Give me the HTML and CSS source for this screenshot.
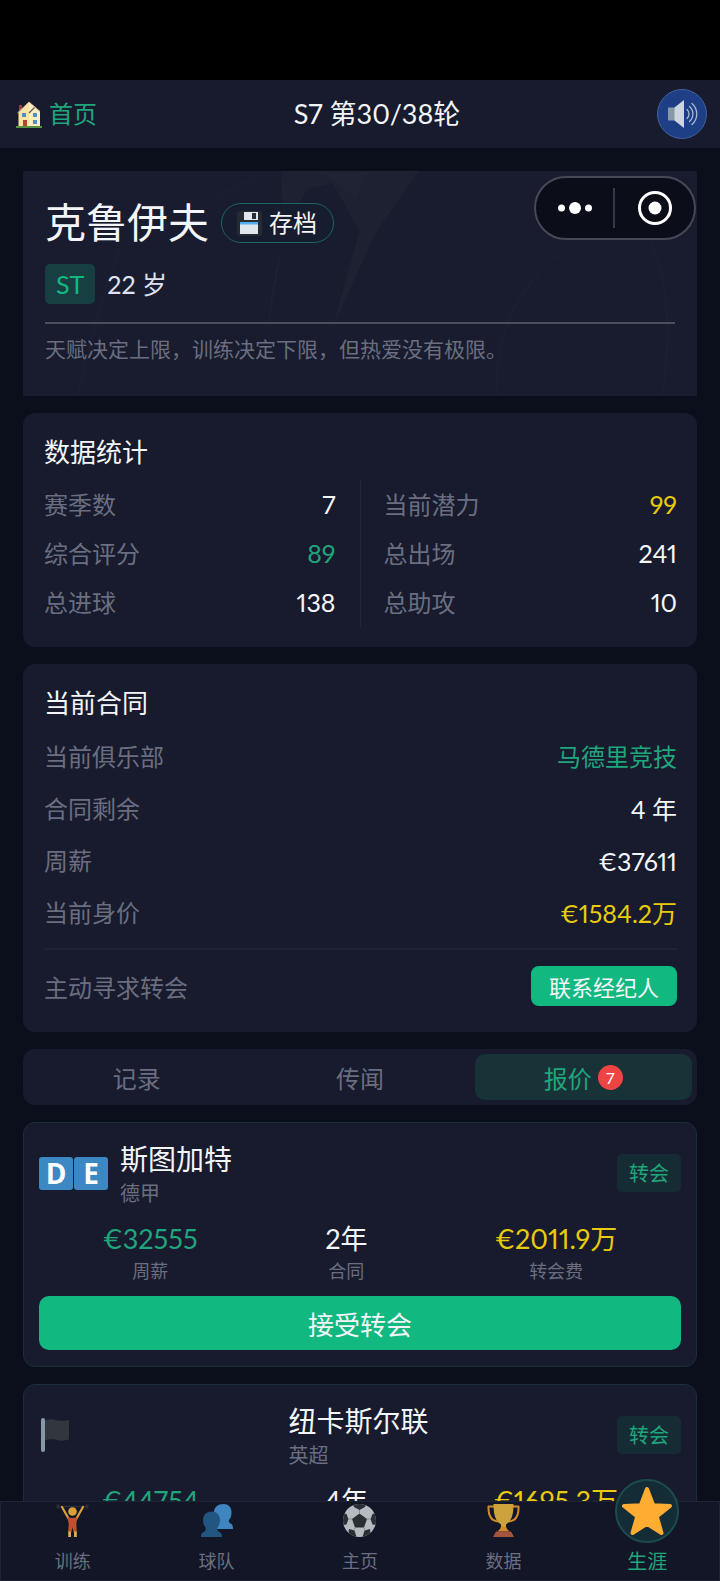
FILE: index.html
```html
<!DOCTYPE html>
<html lang="zh-CN">
<head>
<meta charset="utf-8">
<meta name="viewport" content="width=device-width, initial-scale=1">
<title>球员生涯</title>
<link rel="stylesheet" href="styles.css">
</head>
<body>
<div class="app">
  <div class="status-strip"></div>

  <header class="topbar">
    <a class="topbar__home" href="#home">
      <svg class="icon-house" viewBox="0 0 26 27" aria-hidden="true">
        <path fill="#fbe3a4" d="M2.500 11 9 5l4-4 11 10V25H2.500z"/>
        <path fill="#ffefc4" d="M13 1 24 10V25H13z"/>
        <path fill="#a3384a" d="M3 4h3v4L3 10.500z"/>
        <path fill="none" stroke="#6d5348" stroke-width="1.300" d="M13 12 19.500 5.500"/>
        <path fill="none" stroke="#d9bfa0" stroke-width="1" d="M1.500 12 13 1l11 10"/>
        <path fill="#4a90cf" d="M6 12h4v4H6zM17 12h4v4h-4zM17 19h4v4h-4z"/>
        <path fill="#b4432f" d="M7 19h4v6H7z"/>
        <path fill="#5b9142" d="M0 25h26v2H0z"/>
      </svg>
      <span>首页</span>
    </a>
    <h1 class="topbar__title">S7 第30/38轮</h1>
    <button class="topbar__sound" type="button" aria-label="声音">
      <svg viewBox="0 0 32 32" aria-hidden="true">
        <path fill="#8899a6" d="M2 9.500h7v13H2z"/>
        <path fill="#ccd6dd" d="M18 2v28L8.500 22.500v-13z"/>
        <path fill="none" stroke="#a9b9d0" stroke-width="1.300" stroke-linecap="round" d="M21 11.500a6 6 0 0 1 0 9M23.500 8.500a10 10 0 0 1 0 15M26 5.500a14 14 0 0 1 0 21"/>
      </svg>
    </button>
  </header>

  <main class="content">
    <section class="hero">
      <svg class="hero__art" viewBox="0 0 675 225" preserveAspectRatio="none" aria-hidden="true">
        <path fill="#ffffff" fill-opacity=".025" d="M258 0H396L353 62 310 157 337 60 310 12 285 18Q252 70 245 159L262 62z"/>
        <path fill="#ffffff" fill-opacity=".01" d="M291 0h56l-14 28-22-18z"/>
        <path fill="none" stroke="#ffffff" stroke-opacity=".012" stroke-width="3" d="M98 75Q72 145 55 225M245 0 190 28M628 70Q655 130 640 225M535 84Q470 140 475 225"/>
      </svg>
      <div class="hero__name-row">
        <h2 class="hero__name">克鲁伊夫</h2>
        <button class="save" type="button">
          <svg class="icon-disk" viewBox="0 0 25 25" aria-hidden="true">
            <rect width="25" height="25" rx="3" fill="#262b33"/>
            <path fill="#e1e8ed" d="M7 1h14v8H7z"/>
            <path fill="#292f33" d="M15 2h4v6h-4z"/>
            <path fill="#e1e8ed" d="M3 11h18v12H3z"/>
            <path fill="#55acee" d="M3 11h18v2.500H3z"/>
          </svg>
          <span>存档</span>
        </button>
      </div>
      <div class="hero__meta">
        <span class="position">ST</span>
        <span class="hero__age">22 岁</span>
      </div>
      <p class="hero__quote">天赋决定上限，训练决定下限，但热爱没有极限。</p>
    </section>

    <section class="card">
      <h3 class="card__title">数据统计</h3>
      <div class="stats">
        <dl class="stats__col">
          <div class="row"><dt>赛季数</dt><dd>7</dd></div>
          <div class="row"><dt>综合评分</dt><dd class="green">89</dd></div>
          <div class="row"><dt>总进球</dt><dd>138</dd></div>
        </dl>
        <dl class="stats__col">
          <div class="row"><dt>当前潜力</dt><dd class="gold">99</dd></div>
          <div class="row"><dt>总出场</dt><dd>241</dd></div>
          <div class="row"><dt>总助攻</dt><dd>10</dd></div>
        </dl>
      </div>
    </section>

    <section class="card card--contract">
      <h3 class="card__title">当前合同</h3>
      <dl class="contract">
        <div class="row"><dt>当前俱乐部</dt><dd class="green club">马德里竞技</dd></div>
        <div class="row"><dt>合同剩余</dt><dd>4 年</dd></div>
        <div class="row"><dt>周薪</dt><dd>€37611</dd></div>
        <div class="row"><dt>当前身价</dt><dd class="gold">€1584.2万</dd></div>
      </dl>
      <div class="agent">
        <span class="agent__label">主动寻求转会</span>
        <button class="agent__button" type="button">联系经纪人</button>
      </div>
    </section>

    <nav class="tabs" aria-label="生涯分类">
      <button class="tab" type="button">记录</button>
      <button class="tab" type="button">传闻</button>
      <button class="tab tab--active" type="button">报价<span class="tab__count">7</span></button>
    </nav>

    <article class="offer">
      <div class="offer__head">
        <span class="offer__flag"><span class="letter">D</span><span class="letter">E</span></span>
        <div class="offer__club">
          <h4 class="offer__name">斯图加特</h4>
          <p class="offer__league">德甲</p>
        </div>
        <span class="offer__type">转会</span>
      </div>
      <div class="terms">
        <div class="term"><span class="term__value green">€32555</span><span class="term__label">周薪</span></div>
        <div class="term"><span class="term__value">2年</span><span class="term__label">合同</span></div>
        <div class="term"><span class="term__value gold">€2011.9万</span><span class="term__label">转会费</span></div>
      </div>
      <button class="accept" type="button">接受转会</button>
    </article>

    <article class="offer">
      <div class="offer__head">
        <span class="offer__flag offer__flag--wide">
          <svg class="icon-flag" viewBox="0 0 32 34" aria-hidden="true">
            <path fill="#31373d" d="M5 2.500Q11 .5 17 2t13 0V21.500q-6 2-12 .5T5 22.500z"/>
            <rect x="2" width="4" height="34" rx="2" fill="#8899a6"/>
          </svg>
        </span>
        <div class="offer__club">
          <h4 class="offer__name">纽卡斯尔联</h4>
          <p class="offer__league">英超</p>
        </div>
        <span class="offer__type">转会</span>
      </div>
      <div class="terms">
        <div class="term"><span class="term__value green">€44754</span><span class="term__label">周薪</span></div>
        <div class="term"><span class="term__value">4年</span><span class="term__label">合同</span></div>
        <div class="term"><span class="term__value gold">€1695.3万</span><span class="term__label">转会费</span></div>
      </div>
      <button class="accept" type="button">接受转会</button>
    </article>
  </main>

  <nav class="navbar" aria-label="主导航">
    <a class="navitem" href="#train">
      <svg class="navitem__icon" viewBox="0 0 33 33" aria-hidden="true">
        <path stroke="#292f33" stroke-width="1.500" d="M1 2.500h31"/>
        <path stroke="#292f33" stroke-width="3" d="M2 .5v4M31 .5v4"/>
        <path fill="none" stroke="#d9a03c" stroke-width="2.200" stroke-linecap="round" d="M6 3 12.500 14.500M27 3 20.500 14.500"/>
        <circle cx="16.500" cy="7.500" r="4.300" fill="#d9a03c"/>
        <path fill="#c1502e" d="M11.500 13q5 2 10 0L20.300 20l.5 8h-3.300l-1-5-1 5h-3.300l.5-8z"/>
        <path fill="#e0a95a" d="M12.200 27.500h2.800V33h-2.800zM18 27.500h2.800V33H18z"/>
      </svg>
      <span class="navitem__label">训练</span>
    </a>
    <a class="navitem" href="#team">
      <svg class="navitem__icon" viewBox="0 0 33 33" aria-hidden="true">
        <path fill="#3f85c0" d="M23.500 0c5 0 8 3.500 8 8 0 3-.5 6-2.500 8-.5 2 .3 3 2 3.800 1.300.700 2 2 2 5.200H14V8c0-4.500 4-8 9.500-8z"/>
        <path fill="#22557f" d="M11.500 7.500c5.500 0 8.500 4 8.500 8.500 0 3-1 5.500-2.500 7.500-.5 2.500 0 3.500 2 4.500 1.700.800 2.500 2 2.500 5H1c0-3 .8-4.200 2.500-5 2-1 2.500-2 2-4.500C4 21.500 3 19 3 16c0-4.500 3-8.500 8.500-8.500z"/>
      </svg>
      <span class="navitem__label">球队</span>
    </a>
    <a class="navitem" href="#main">
      <svg class="navitem__icon" viewBox="0 0 33 33" aria-hidden="true">
        <defs><clipPath id="ball"><circle cx="16.500" cy="16.500" r="16.500"/></clipPath></defs>
        <g clip-path="url(#ball)">
          <path fill="#b5bbc1" d="M0 0h33v33H0z"/>
          <path fill="#292f33" d="M16.500 9.500 24 15l-3 8.500h-9L9 15zM10 0h13l-1 3-5.500 3L11 3zM0 9l3.500 1 2 5-2 5.500L0 21zM33 9l-3.500 1-2 5 2 5.500 3.500.5zM6 25l5.500 1.500 2 6.500H5zM27 25l-5.500 1.500-2 6.500H28z"/>
          <path stroke="#7a8188" stroke-width=".8" d="M16.500 9.500V6M24 15h3.500M9 15H5.500M12 23.500l-1 3M21 23.500l1 3"/>
        </g>
      </svg>
      <span class="navitem__label">主页</span>
    </a>
    <a class="navitem" href="#data">
      <svg class="navitem__icon" viewBox="0 0 33 33" aria-hidden="true">
        <path fill="none" stroke="#d18d2c" stroke-width="2" stroke-linejoin="round" d="M8 2.500H1.500Q1 17 11.500 17.500M25 2.500h6.500Q32 17 21.500 17.500"/>
        <path fill="#cda23c" d="M6.500 0h20c0 11-2 17-7.500 20.500V25h-5v-4.500C8.500 17 6.500 11 6.500 0z"/>
        <path fill="#d18d2c" d="M14 22.500h5q.5 3 3.500 5h-12q3-2 3.500-5z"/>
        <path fill="#a5543f" d="M9 27.500h15l3 5.500H6z"/>
      </svg>
      <span class="navitem__label">数据</span>
    </a>
    <a class="navitem navitem--active" href="#career" aria-current="page">
      <span class="navitem__disc">
        <svg class="icon-star" viewBox="0 0 50 48" aria-hidden="true">
          <path fill="#ffac33" stroke="#ffac33" stroke-width="4" stroke-linejoin="round" d="M25 2 31.200 18.300 48 19 34.800 29.500 39.500 46 25 36.800 10.500 46 15.200 29.500 2 19 18.800 18.300z"/>
        </svg>
      </span>
      <span class="navitem__label">生涯</span>
    </a>
  </nav>

  <div class="capsule">
    <button class="capsule__button" type="button" aria-label="更多">
      <svg class="icon-dots" viewBox="0 0 34 12" aria-hidden="true">
        <g fill="#fff"><circle cx="3.500" cy="6" r="3.500"/><circle cx="17" cy="6" r="6"/><circle cx="30.500" cy="6" r="3.500"/></g>
      </svg>
    </button>
    <button class="capsule__button" type="button" aria-label="关闭">
      <svg class="icon-target" viewBox="0 0 34 34" aria-hidden="true">
        <circle cx="17" cy="17" r="15.500" fill="none" stroke="#fff" stroke-width="3"/>
        <circle cx="17" cy="17" r="6.500" fill="#fff"/>
      </svg>
    </button>
  </div>
</div>
</body>
</html>
```

FILE: styles.css
```css
:root {
  --bg: #0b0f1b;
  --card: #171b2d;
  --green: #1fa67c;
  --green-solid: #11b981;
  --gold: #e9cb0d;
  --muted: #6a6e80;
  --text: #f4f5f8;
}

* {
  box-sizing: border-box;
}

body,
h1,
h2,
h3,
h4,
p,
dl,
dd {
  margin: 0;
}

h1,
h2,
h3,
h4 {
  font-weight: 400;
}

body {
  background: var(--bg);
  color: var(--text);
  font-family: Lato, "Noto Sans CJK SC", sans-serif;
  font-variant-numeric: proportional-nums;
  font-size: 24px;
}

button {
  font: inherit;
  color: inherit;
  border: 0;
  padding: 0;
  cursor: pointer;
}

a {
  color: inherit;
  text-decoration: none;
}

svg {
  display: block;
  flex: none;
}

.green {
  color: var(--green);
}

.gold {
  color: var(--gold);
}

.app {
  position: relative;
  display: flex;
  flex-direction: column;
  height: 100vh;
  overflow: hidden;
}

.status-strip {
  flex: none;
  height: 80px;
  background: #000;
}

/* Top bar */
.topbar {
  flex: none;
  display: flex;
  align-items: center;
  justify-content: space-between;
  height: 68px;
  padding: 0 13px 0 16px;
  background: var(--card);
}

.topbar__home {
  display: flex;
  align-items: center;
  gap: 7px;
  color: var(--green);
  line-height: 36px;
}

.icon-house {
  width: 26px;
  height: 27px;
}

.topbar__title {
  font-size: 27px;
  line-height: 36px;
}

.topbar__sound {
  display: grid;
  place-items: center;
  width: 50px;
  height: 50px;
  border: 1px solid #41619f;
  border-radius: 50%;
  background: #1e3f85;
}

.topbar__sound svg {
  width: 32px;
  height: 32px;
}

/* Scrolling content */
.content {
  flex: 1;
  min-height: 0;
  display: flex;
  flex-direction: column;
  gap: 17px;
  padding: 23px 23px 0;
  overflow-y: auto;
  scrollbar-width: none;
}

.content > * {
  flex: none;
}

.hero {
  position: relative;
  padding: 22px 22px 31px;
  background: #181c2e;
}

.hero__art {
  position: absolute;
  inset: 0;
  width: 100%;
  height: 100%;
}

.hero__name-row,
.hero__meta {
  position: relative;
  display: flex;
  align-items: center;
  gap: 12px;
}

.hero__name {
  font-size: 41px;
  line-height: 60px;
}

.save {
  display: flex;
  align-items: center;
  gap: 7px;
  height: 40px;
  padding: 0 16px 0 15px;
  border: 1px solid #1d6560;
  border-radius: 20px;
  background: #151d2e;
  line-height: 36px;
}

.icon-disk {
  width: 25px;
  height: 25px;
}

.hero__meta {
  margin-top: 11px;
}

.position {
  padding: 0 11px;
  border-radius: 5px;
  background: #173f42;
  color: var(--green-solid);
  font-size: 25px;
  line-height: 40px;
}

.hero__age {
  color: #dfe1f2;
  font-size: 25px;
  line-height: 40px;
}

.hero__quote {
  position: relative;
  margin-top: 18px;
  padding-top: 9px;
  border-top: 2px solid #4b4e5c;
  color: var(--muted);
  font-size: 21px;
  line-height: 32px;
}

/* Cards */
.card {
  padding: 20px 20px 20px 21px;
  border-radius: 12px;
  background: var(--card);
}

.card--contract {
  padding-bottom: 26px;
}

.card__title {
  margin-bottom: 9px;
  font-size: 26px;
  line-height: 38px;
}

.stats {
  display: grid;
  grid-template-columns: 1fr 1fr;
}

.stats__col:first-child {
  padding-right: 24px;
  border-right: 1px solid #212639;
}

.stats__col:last-child {
  padding-left: 23px;
}

.row {
  display: flex;
  justify-content: space-between;
  line-height: 49px;
}

.row dt {
  color: var(--muted);
}

.row dd {
  font-size: 25px;
}

.row .club {
  font-size: 24px;
}

.contract .row {
  line-height: 52px;
}

.agent {
  display: flex;
  align-items: center;
  justify-content: space-between;
  margin-top: 9px;
  padding-top: 16px;
  border-top: 2px solid #1e2335;
}

.agent__label {
  color: var(--muted);
}

.agent__button {
  height: 40px;
  padding: 0 18px;
  border-radius: 8px;
  background: var(--green-solid);
  font-size: 22px;
}

/* Tabs */
.tabs {
  display: flex;
  gap: 6px;
  padding: 5px;
  border-radius: 12px;
  background: var(--card);
}

.tab {
  flex: 1;
  display: flex;
  align-items: center;
  justify-content: center;
  gap: 6px;
  height: 46px;
  border-radius: 10px;
  background: transparent;
  color: var(--muted);
}

.tab--active {
  background: #173338;
  color: var(--green);
}

.tab__count {
  width: 25px;
  border-radius: 50%;
  background: #ef4444;
  color: #fff;
  font-size: 16px;
  line-height: 25px;
  text-align: center;
}

/* Offers */
.offer {
  padding: 16px 15px;
  border: 1px solid #1a2f38;
  border-radius: 12px;
  background: var(--card);
}

.offer__head {
  display: flex;
  align-items: center;
  gap: 12px;
}

.offer__flag {
  flex: none;
  display: flex;
  gap: 1px;
}

.offer__flag--wide {
  width: 37%;
}

.letter {
  width: 34px;
  border-radius: 3px;
  background: #3b88c3;
  color: #fff;
  font-family: "Open Sans", sans-serif;
  font-size: 28px;
  font-weight: 700;
  line-height: 33px;
  text-align: center;
}

.icon-flag {
  width: 32px;
  height: 34px;
}

.offer__club {
  flex: 1;
}

.offer__name {
  font-size: 28px;
  line-height: 40px;
}

.offer__league {
  color: var(--muted);
  font-size: 20px;
  line-height: 28px;
}

.offer__type {
  padding: 0 12px;
  border-radius: 5px;
  background: #162c35;
  color: var(--green);
  font-size: 20px;
  line-height: 38px;
}

.terms {
  display: flex;
  justify-content: space-around;
  margin: 14px 0 11px;
}

.term {
  display: flex;
  flex-direction: column;
  align-items: center;
}

.term__value {
  font-size: 27px;
  line-height: 36px;
}

.term__label {
  color: var(--muted);
  font-size: 18px;
  line-height: 28px;
}

.accept {
  width: 100%;
  height: 54px;
  border-radius: 10px;
  background: var(--green-solid);
  font-size: 26px;
}

/* Bottom navigation */
.navbar {
  flex: none;
  position: relative;
  display: grid;
  grid-template-columns: repeat(5, 1fr);
  height: 80px;
  border: 1px solid #1e2335;
  background: #131626;
}

.navitem {
  display: flex;
  flex-direction: column;
  align-items: center;
  gap: 12px;
  padding-top: 2px;
  color: var(--muted);
}

.navitem__icon {
  width: 33px;
  height: 33px;
}

.navitem__label {
  font-size: 18px;
  line-height: 24px;
}

.navitem--active {
  gap: 6px;
  color: var(--green);
}

.navitem--active .navitem__label {
  font-size: 20px;
}

.navitem__disc {
  display: grid;
  place-items: center;
  width: 64px;
  height: 64px;
  margin-top: -25px;
  border: 2px solid #1b4b4a;
  border-radius: 50%;
  background: #142c35;
}

.icon-star {
  width: 50px;
  height: 48px;
}

/* Floating host controls */
.capsule {
  position: absolute;
  top: 176px;
  right: 24px;
  display: grid;
  grid-template-columns: 1fr 1fr;
  align-items: center;
  width: 162px;
  height: 64px;
  border: 2px solid #464955;
  border-radius: 32px;
  background: #0b0e19;
}

.capsule__button {
  display: grid;
  place-items: center;
  height: 40px;
  background: transparent;
}

.capsule__button:first-child {
  border-right: 2px solid #373a46;
}

.icon-dots {
  width: 34px;
  height: 12px;
}

.icon-target {
  width: 34px;
  height: 34px;
}
```
